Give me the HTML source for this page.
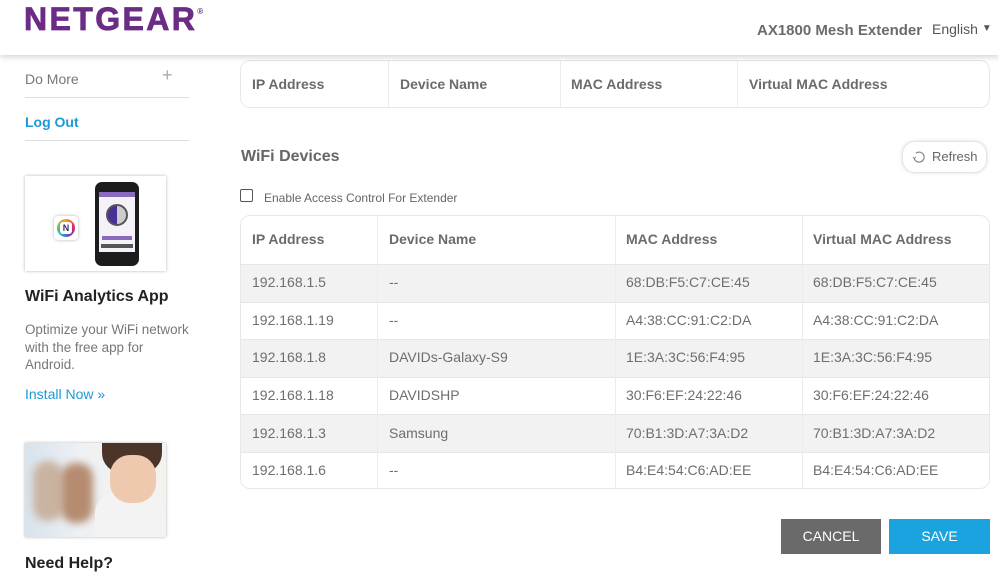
<!DOCTYPE html>
<html><head><meta charset="utf-8"><style>
*{margin:0;padding:0;box-sizing:border-box}
body{width:999px;height:563px;overflow:hidden;background:#fff;font-family:"Liberation Sans",Arial,sans-serif;position:relative;color:#666}
.a{position:absolute}
.hdr{left:0;top:0;width:999px;height:55px;background:#fff;box-shadow:0 2px 6px rgba(0,0,0,.18);z-index:2}
.logo{left:24px;top:1px;font-size:32px;font-weight:bold;color:#6b2c86;letter-spacing:2.4px;-webkit-text-stroke:0.8px #6b2c86}
.tbl{border:1px solid #e8e8e8;border-radius:10px;overflow:hidden}
.cell{position:absolute;font-size:14px;white-space:nowrap}
.th{font-weight:bold;color:#6b6b6b}
.td{color:#6e6e6e}
.vl{position:absolute;top:0;bottom:0;width:1px;background:#ececec}
.row{position:absolute;left:0;right:0;border-top:1px solid #e6e6e6}
</style></head><body>
<div class="a hdr">
 <div class="a logo">NETGEAR<sup style="font-size:8px;vertical-align:top;position:relative;top:6px;margin-left:0;-webkit-text-stroke:0">®</sup></div>
 <div class="a" style="left:757px;top:22px;font-size:15px;font-weight:bold;color:#6b6b6b">AX1800 Mesh Extender</div>
 <div class="a" style="left:932px;top:21px;font-size:14px;color:#555">English <span style="font-size:10px;position:relative;top:-3px">▼</span></div>
</div>

<div class="a" style="left:25px;top:71px;font-size:14px;color:#777">Do More</div>
<div class="a" style="left:162px;top:65px;font-size:18px;color:#aaa;font-weight:300">+</div>
<div class="a" style="left:25px;top:97px;width:164px;height:1px;background:#ddd"></div>
<div class="a" style="left:25px;top:114px;font-size:14px;font-weight:bold;color:#1d9ad6">Log Out</div>
<div class="a" style="left:25px;top:140px;width:164px;height:1px;background:#ddd"></div>

<div class="a" style="left:25px;top:176px;width:141px;height:95px;background:#fff;box-shadow:0 0 3px rgba(0,0,0,.3)">
 <div class="a" style="left:29px;top:40px;width:24px;height:24px;border-radius:4px;background:#fff;box-shadow:0 0 3px rgba(0,0,0,.3)">
  <div class="a" style="left:3px;top:3px;width:18px;height:18px;border-radius:50%;background:conic-gradient(#f7a21b,#e8256f,#7a3ea0,#22a8e0,#7fc242,#f7a21b)"></div>
  <div class="a" style="left:6px;top:6px;width:12px;height:12px;border-radius:3px;background:#fff;font-size:9px;font-weight:bold;color:#3b2a6e;text-align:center;line-height:12px">N</div>
 </div>
 <div class="a" style="left:70px;top:6px;width:44px;height:84px;border-radius:7px;background:#1c1c1c">
  <div class="a" style="left:4px;top:10px;width:36px;height:60px;background:#f4f2f8">
   <div class="a" style="left:0;top:0;width:36px;height:5px;background:#8a6abf"></div>
   <div class="a" style="left:7px;top:12px;width:22px;height:22px;border-radius:50%;background:conic-gradient(#ccc 0 50%,#4a2f95 50%);border:2px solid #555"></div>
   <div class="a" style="left:3px;top:44px;width:30px;height:4px;background:#8a6abf"></div>
   <div class="a" style="left:2px;top:52px;width:32px;height:4px;background:#555"></div>
  </div>
 </div>
</div>
<div class="a" style="left:25px;top:288px;font-size:16px;font-weight:bold;color:#222">WiFi Analytics App</div>
<div class="a" style="left:25px;top:321px;font-size:13.4px;color:#777;line-height:17.5px;width:165px">Optimize your WiFi network with the free app for Android.</div>
<div class="a" style="left:25px;top:386px;font-size:14px;color:#1d9ad6">Install Now »</div>
<div class="a" style="left:25px;top:443px;width:141px;height:94px;box-shadow:0 0 3px rgba(0,0,0,.3);overflow:hidden;background:linear-gradient(90deg,#d8e3ec,#eef1f4 40%,#f4f2ef)">
 <div class="a" style="left:8px;top:18px;width:30px;height:60px;border-radius:14px;background:#c9b3a1;filter:blur(4px)"></div>
 <div class="a" style="left:36px;top:20px;width:32px;height:60px;border-radius:14px;background:#b68c70;filter:blur(4px)"></div>
 <div class="a" style="left:70px;top:50px;width:70px;height:50px;border-radius:20px 20px 0 0;background:#f3f3f3"></div>
 <div class="a" style="left:77px;top:0;width:60px;height:30px;border-radius:0 0 20px 20px;background:#4a3528"></div>
 <div class="a" style="left:85px;top:12px;width:46px;height:48px;border-radius:20px;background:#efc9ad"></div>
</div>
<div class="a" style="left:25px;top:555px;font-size:16px;font-weight:bold;color:#222">Need Help?</div>

<div class="a tbl" style="left:240px;top:60px;width:750px;height:48px">
 <div class="vl" style="left:147px"></div><div class="vl" style="left:319px"></div><div class="vl" style="left:496px"></div>
 <div class="cell th" style="left:11px;top:15px">IP Address</div>
 <div class="cell th" style="left:159px;top:15px">Device Name</div>
 <div class="cell th" style="left:330px;top:15px">MAC Address</div>
 <div class="cell th" style="left:508px;top:15px">Virtual MAC Address</div>
</div>

<div class="a" style="left:241px;top:148px;font-size:16px;font-weight:bold;color:#666">WiFi Devices</div>
<div class="a" style="left:903px;top:142px;width:83px;height:30px;border-radius:12px;background:#fff;box-shadow:0 0 4px rgba(0,0,0,.25);font-size:13px;color:#666;line-height:30px;padding-left:29px">Refresh
 <svg class="a" style="left:9px;top:8px" width="14" height="14" viewBox="0 0 14 14"><path d="M4 3.2A5 5 0 1 1 2.2 8" fill="none" stroke="#888" stroke-width="1.2"/><path d="M1 7l1.2 1.5L3.6 7" fill="none" stroke="#888" stroke-width="1"/></svg>
</div>

<div class="a" style="left:240px;top:189px;width:13px;height:13px;border:1px solid #555;border-radius:2px"></div>
<div class="a" style="left:264px;top:191px;font-size:12px;color:#666">Enable Access Control For Extender</div>

<div class="a tbl" style="left:240px;top:215px;width:750px;height:274px">
 <div class="a" style="left:0;right:0;top:48px;height:38px;background:#f2f2f2"></div>
 <div class="a" style="left:0;right:0;top:123px;height:38px;background:#f2f2f2"></div>
 <div class="a" style="left:0;right:0;top:198px;height:38px;background:#f2f2f2"></div>
 <div class="row" style="top:48px"></div><div class="row" style="top:86px"></div><div class="row" style="top:123px"></div><div class="row" style="top:161px"></div><div class="row" style="top:198px"></div><div class="row" style="top:236px"></div>
 <div class="vl" style="left:136px"></div><div class="vl" style="left:374px"></div><div class="vl" style="left:561px"></div>
 <div class="cell th" style="left:11px;top:15px">IP Address</div>
 <div class="cell th" style="left:148px;top:15px">Device Name</div>
 <div class="cell th" style="left:385px;top:15px">MAC Address</div>
 <div class="cell th" style="left:572px;top:15px">Virtual MAC Address</div>

 <div class="cell td" style="left:11px;top:58px">192.168.1.5</div><div class="cell td" style="left:148px;top:58px">--</div><div class="cell td" style="left:385px;top:58px">68:DB:F5:C7:CE:45</div><div class="cell td" style="left:572px;top:58px">68:DB:F5:C7:CE:45</div>
 <div class="cell td" style="left:11px;top:96px">192.168.1.19</div><div class="cell td" style="left:148px;top:96px">--</div><div class="cell td" style="left:385px;top:96px">A4:38:CC:91:C2:DA</div><div class="cell td" style="left:572px;top:96px">A4:38:CC:91:C2:DA</div>
 <div class="cell td" style="left:11px;top:133px">192.168.1.8</div><div class="cell td" style="left:148px;top:133px">DAVIDs-Galaxy-S9</div><div class="cell td" style="left:385px;top:133px">1E:3A:3C:56:F4:95</div><div class="cell td" style="left:572px;top:133px">1E:3A:3C:56:F4:95</div>
 <div class="cell td" style="left:11px;top:171px">192.168.1.18</div><div class="cell td" style="left:148px;top:171px">DAVIDSHP</div><div class="cell td" style="left:385px;top:171px">30:F6:EF:24:22:46</div><div class="cell td" style="left:572px;top:171px">30:F6:EF:24:22:46</div>
 <div class="cell td" style="left:11px;top:209px">192.168.1.3</div><div class="cell td" style="left:148px;top:209px">Samsung</div><div class="cell td" style="left:385px;top:209px">70:B1:3D:A7:3A:D2</div><div class="cell td" style="left:572px;top:209px">70:B1:3D:A7:3A:D2</div>
 <div class="cell td" style="left:11px;top:246px">192.168.1.6</div><div class="cell td" style="left:148px;top:246px">--</div><div class="cell td" style="left:385px;top:246px">B4:E4:54:C6:AD:EE</div><div class="cell td" style="left:572px;top:246px">B4:E4:54:C6:AD:EE</div>
</div>

<div class="a" style="left:781px;top:519px;width:100px;height:35px;background:#6a6a6a;color:#fff;font-size:14px;text-align:center;line-height:35px">CANCEL</div>
<div class="a" style="left:889px;top:519px;width:101px;height:35px;background:#1ba3e0;color:#fff;font-size:14px;text-align:center;line-height:35px">SAVE</div>
</body></html>
